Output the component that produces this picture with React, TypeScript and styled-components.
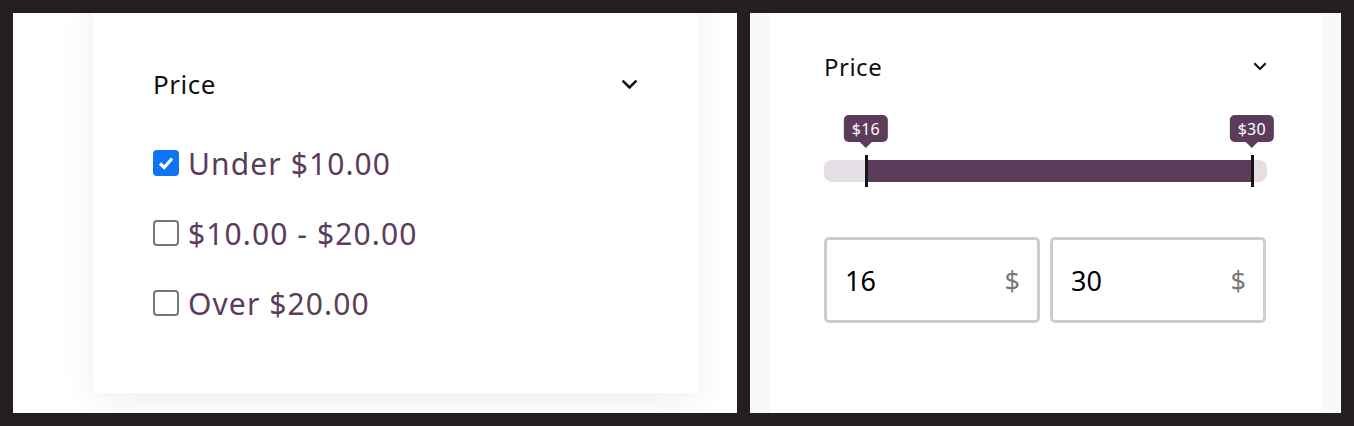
import React from "react";
import styled, { createGlobalStyle } from "styled-components";

const Global = createGlobalStyle`
  html, body { margin: 0; padding: 0; background: #231f20; }
  * { box-sizing: border-box; }
`;

const FONT = `"Noto Sans", "Open Sans", sans-serif`;
const PURPLE = "#5b3d5b";

const Page = styled.div`
  display: flex;
  gap: 13px;
  padding: 13px;
  height: 426px;
  font-family: ${FONT};
`;

const LeftPanel = styled.div`
  width: 724px;
  height: 400px;
  background: #ffffff;
  overflow: hidden;
  display: flex;
  padding: 0 39px 20px 80px;
`;

const CheckCard = styled.div`
  flex: 1;
  margin-top: -20px;
  background: #ffffff;
  box-shadow: 0 6px 34px rgba(0, 0, 0, 0.07);
  padding: 71px 60px 0 60px;
  display: flex;
  flex-direction: column;
`;

const Header = styled.div<{ $size: number; $h: number }>`
  display: flex;
  align-items: center;
  justify-content: space-between;
  height: ${(p) => p.$h}px;
  font-size: ${(p) => p.$size}px;
  letter-spacing: 0.5px;
  color: #111;
`;

const Options = styled.div`
  display: flex;
  flex-direction: column;
  gap: 30px;
  margin-top: 39px;
`;

const OptionRow = styled.label`
  display: flex;
  align-items: center;
  gap: 9px;
  height: 40px;
  font-size: 30px;
  letter-spacing: 1.1px;
  color: ${PURPLE};
`;

const Box = styled.span<{ $checked: boolean }>`
  width: 26px;
  height: 26px;
  flex: none;
  border-radius: 4px;
  display: flex;
  align-items: center;
  justify-content: center;
  background: ${(p) => (p.$checked ? "#0b75f6" : "#fff")};
  border: ${(p) => (p.$checked ? "none" : "2px solid #767676")};
`;

const RightPanel = styled.div`
  width: 591px;
  height: 400px;
  background: #f9f9f9;
  display: flex;
  padding: 0 20px;
`;

const RangeCard = styled.div`
  flex: 1;
  background: #ffffff;
  padding: 38px 54px 0 54px;
  display: flex;
  flex-direction: column;
`;

const Slider = styled.div`
  position: relative;
  height: 80px;
  margin-top: 29px;
`;

const Track = styled.div`
  position: absolute;
  left: 0;
  right: 0;
  top: 50px;
  height: 22px;
  border-radius: 8px;
  background: #e5dee5;
`;

const Fill = styled.div`
  position: absolute;
  top: 50px;
  height: 22px;
  background: ${PURPLE};
`;

const Handle = styled.div`
  position: absolute;
  top: 45px;
  width: 3px;
  height: 32px;
  margin-left: -1px;
  background: #141414;
`;

const Tip = styled.div`
  position: absolute;
  top: 5px;
  transform: translateX(-50%);
  height: 27px;
  padding: 0 8px;
  border-radius: 5px;
  background: ${PURPLE};
  color: #fff;
  font-size: 16px;
  letter-spacing: 0.3px;
  display: flex;
  align-items: center;
  &::after {
    content: "";
    position: absolute;
    left: 50%;
    bottom: -6px;
    margin-left: -6px;
    border-left: 6px solid transparent;
    border-right: 6px solid transparent;
    border-top: 6px solid ${PURPLE};
  }
`;

const Inputs = styled.div`
  display: grid;
  grid-template-columns: 216px 216px;
  gap: 10px;
  margin-top: 47px;
`;

const Field = styled.div`
  height: 86px;
  border: 3px solid #cdcdcd;
  border-radius: 5px;
  display: flex;
  align-items: center;
  justify-content: space-between;
  padding: 0 17px 0 18px;
`;

const Value = styled.span`
  font-size: 27px;
  color: #000;
`;

const Unit = styled.span`
  font-size: 27px;
  color: #777;
`;

const Chevron = ({ w }: { w: number }) => (
  <svg width={w} height={w * 0.6} viewBox="0 0 16 9.6" fill="none">
    <path d="M1.5 1.5 L8 8 L14.5 1.5" stroke="#111" strokeWidth="2.4" />
  </svg>
);

const options = [
  { label: "Under $10.00", checked: true },
  { label: "$10.00 - $20.00", checked: false },
  { label: "Over $20.00", checked: false },
];

const MIN = 14.48;
const MAX = 30.55;
const TRACK = 443;
const pos = (v: number) => ((v - MIN) / (MAX - MIN)) * TRACK;

export default function App() {
  const lo = 16;
  const hi = 30;
  return (
    <>
      <Global />
      <Page>
        <LeftPanel>
          <CheckCard>
            <Header $size={26} $h={40}>
              <span>Price</span>
              <Chevron w={17} />
            </Header>
            <Options>
              {options.map((o) => (
                <OptionRow key={o.label}>
                  <Box $checked={o.checked}>
                    {o.checked && (
                      <svg width="18" height="18" viewBox="0 0 18 18">
                        <path d="M3 9.5 L7.2 13.5 L15 4.5" stroke="#fff" strokeWidth="3.2" fill="none" />
                      </svg>
                    )}
                  </Box>
                  <span>{o.label}</span>
                </OptionRow>
              ))}
            </Options>
          </CheckCard>
        </LeftPanel>
        <RightPanel>
          <RangeCard>
            <Header $size={24} $h={30}>
              <span>Price</span>
              <Chevron w={14} />
            </Header>
            <Slider>
              <Track />
              <Fill style={{ left: pos(lo), width: pos(hi) - pos(lo) }} />
              <Handle style={{ left: pos(lo) }} />
              <Handle style={{ left: pos(hi) }} />
              <Tip style={{ left: pos(lo) }}>${lo}</Tip>
              <Tip style={{ left: pos(hi) }}>${hi}</Tip>
            </Slider>
            <Inputs>
              <Field>
                <Value>{lo}</Value>
                <Unit>$</Unit>
              </Field>
              <Field>
                <Value>{hi}</Value>
                <Unit>$</Unit>
              </Field>
            </Inputs>
          </RangeCard>
        </RightPanel>
      </Page>
    </>
  );
}
